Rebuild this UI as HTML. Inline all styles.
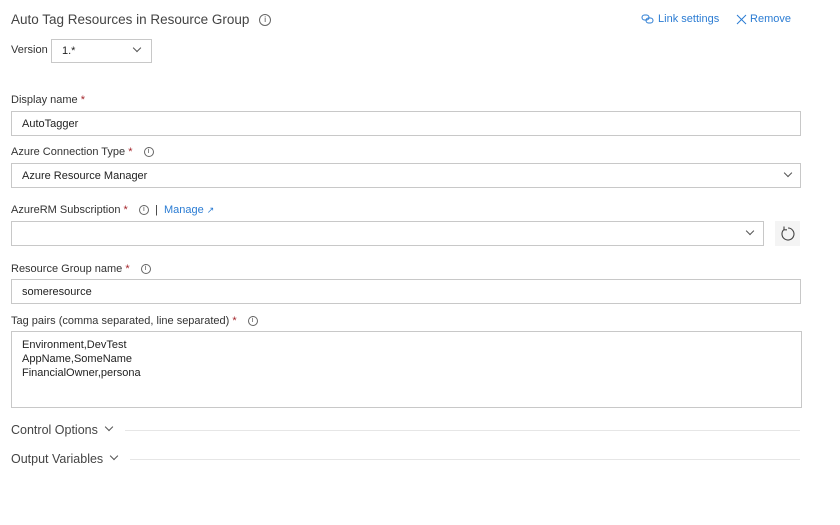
<!DOCTYPE html>
<html><head><meta charset="utf-8"><style>
*{box-sizing:border-box;margin:0;padding:0}
body{width:840px;height:525px;background:#fff;font-family:"Liberation Sans",sans-serif;color:#333;position:relative;overflow:hidden;font-size:11px}
.a{position:absolute;white-space:nowrap}
.box{position:absolute;border:1px solid #c8c8c8;background:#fff}
.in{padding-left:10px;line-height:24px;color:#222}
.req{color:#a4262c}
.info{display:inline-block;width:10px;height:10px;border:1px solid #666;border-radius:50%;font-size:7px;line-height:8px;text-align:center;vertical-align:middle;color:#444}
.chev{position:absolute;width:6px;height:6px;border-right:1px solid #555;border-bottom:1px solid #555;transform:rotate(45deg)}
.blue{color:#2b7cd3}
.line{position:absolute;height:1px;background:#e6e6e6}
</style></head><body>
<div class="a" style="left:11px;top:12px;font-size:13.5px;color:#444">Auto Tag Resources in Resource Group <span class="info" style="width:12px;height:12px;font-size:8px;line-height:10px;margin-left:6px">i</span></div>
<div class="a blue" style="left:641px;top:13px">
<svg width="14" height="10" viewBox="0 0 14 10" style="vertical-align:middle"><rect x="1" y="1" width="7" height="5" rx="2.5" fill="none" stroke="#2b7cd3"/><rect x="5" y="4" width="7" height="5" rx="2.5" fill="none" stroke="#2b7cd3"/></svg> Link settings</div>
<div class="a blue" style="left:736px;top:13px"><svg width="11" height="11" viewBox="0 0 11 11" style="vertical-align:middle"><path d="M1 1L10 10M10 1L1 10" stroke="#2b7cd3" stroke-width="1"/></svg> Remove</div>
<div class="a" style="left:11px;top:44px">Version</div>
<div class="box in" style="left:51px;top:39px;width:101px;height:24px;line-height:22px">1.*</div>
<div class="chev" style="left:134px;top:45px"></div>

<div class="a" style="left:11px;top:94px">Display name <span class="req">*</span></div>
<div class="box in" style="left:11px;top:111px;width:790px;height:25px">AutoTagger</div>

<div class="a" style="left:11px;top:146px">Azure Connection Type <span class="req">*</span> <span class="info" style="margin-left:8px">i</span></div>
<div class="box in" style="left:11px;top:163px;width:790px;height:25px">Azure Resource Manager</div>
<div class="chev" style="left:785px;top:170px"></div>

<div class="a" style="left:11px;top:204px">AzureRM Subscription <span class="req">*</span> <span class="info" style="margin-left:8px">i</span> &nbsp;| &nbsp;<span class="blue">Manage <span style="font-size:9px">↗</span></span></div>
<div class="box" style="left:11px;top:221px;width:753px;height:25px"></div>
<div class="chev" style="left:747px;top:228px"></div>
<div class="a" style="left:775px;top:221px;width:25px;height:25px;background:#f4f4f4"><svg width="25" height="25" viewBox="0 0 25 25"><path d="M9 8.5 A6 6 0 1 0 13 7" fill="none" stroke="#444" stroke-width="1.1"/><path d="M9 5.5 L9 8.8 L12 8.8" fill="none" stroke="#444" stroke-width="1.1"/></svg></div>

<div class="a" style="left:11px;top:263px">Resource Group name <span class="req">*</span> <span class="info" style="margin-left:8px">i</span></div>
<div class="box in" style="left:11px;top:279px;width:790px;height:25px">someresource</div>

<div class="a" style="left:11px;top:315px">Tag pairs (comma separated, line separated) <span class="req">*</span> <span class="info" style="margin-left:8px">i</span></div>
<div class="box" style="left:11px;top:331px;width:791px;height:77px;padding:6px 0 0 10px;line-height:14px;color:#222">Environment,DevTest<br>AppName,SomeName<br>FinancialOwner,persona</div>

<div class="a" style="left:11px;top:423px;font-size:12.5px;color:#444">Control Options</div>
<div class="chev" style="left:106px;top:424px"></div>
<div class="line" style="left:125px;top:430px;width:675px"></div>
<div class="a" style="left:11px;top:452px;font-size:12.5px;color:#444">Output Variables</div>
<div class="chev" style="left:111px;top:453px"></div>
<div class="line" style="left:130px;top:459px;width:670px"></div>
</body></html>
